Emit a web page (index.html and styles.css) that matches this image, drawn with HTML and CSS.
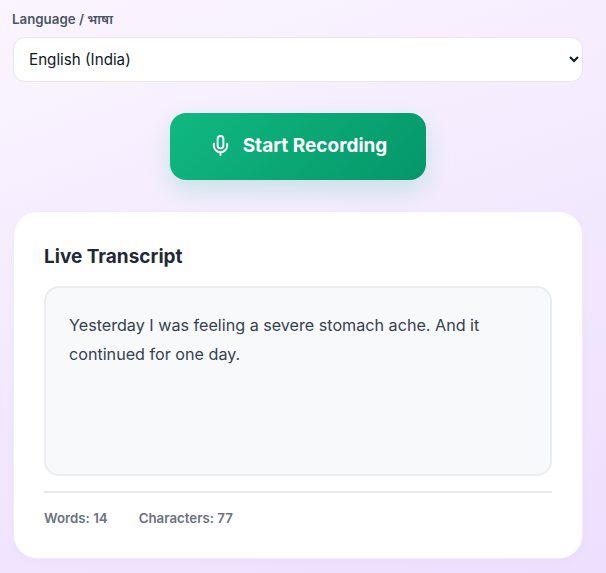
FILE: index.html
```html
<!DOCTYPE html>
<html lang="en">

<head>
    <meta charset="UTF-8">
    <meta name="viewport" content="width=device-width, initial-scale=1.0">
    <title>Live Transcript</title>
    <link rel="stylesheet" href="styles.css">
</head>

<body>

    <div class="language">
        <label class="language-label" for="language">Language / भाषा</label>
        <select class="language-select" id="language">
            <option>English (India)</option>
        </select>
    </div>

    <div class="record-row">
        <button class="record-button">
            <svg class="mic" viewBox="0 0 24 24" fill="none" stroke="currentColor" stroke-width="2" stroke-linecap="round" stroke-linejoin="round">
                <path d="M12 2a3 3 0 0 0-3 3v7a3 3 0 0 0 6 0V5a3 3 0 0 0-3-3z"></path>
                <path d="M19 10v2a7 7 0 0 1-14 0v-2"></path>
                <line x1="12" y1="19" x2="12" y2="22"></line>
            </svg>
            Start Recording
        </button>
    </div>

    <div class="card">
        <h2 class="card-title">Live Transcript</h2>
        <div class="transcript">Yesterday I was feeling a severe stomach ache. And it continued for one day.</div>
        <div class="stats">
            <span>Words: 14</span>
            <span>Characters: 77</span>
        </div>
    </div>

</body>

</html>
```

FILE: styles.css
```css
* {
    box-sizing: border-box;
}

body {
    font-family: "Inter", "Noto Sans", sans-serif;
    background: linear-gradient(160deg, #fbf5ff 0%, #f2e8fe 55%, #eddffe 100%);
    height: 573px;
    margin: 0;
    padding: 11px 23px 0 13px;
    overflow: hidden;
}

.language-label {
    display: block;
    font-size: 13.3px;
    font-weight: 600;
    line-height: 17px;
    color: #4b5563;
    margin: 0 0 9px -1px;
}

.language-select {
    display: block;
    width: 100%;
    height: 45px;
    padding: 0 11px;
    font-family: inherit;
    font-size: 15.2px;
    color: #111827;
    background-color: #fff;
    border: 1px solid #e9e6ef;
    border-radius: 12px;
}

.record-row {
    display: flex;
    justify-content: center;
    margin-top: 31px;
}

.record-button {
    display: flex;
    align-items: center;
    justify-content: center;
    gap: 11px;
    width: 256px;
    height: 67px;
    padding-bottom: 3px;
    font-family: inherit;
    font-size: 19px;
    font-weight: 700;
    color: #fff;
    background: linear-gradient(135deg, #10b981, #059669);
    border: none;
    border-radius: 16px;
    box-shadow: 0 10px 25px rgba(16, 185, 129, 0.2);
}

.mic {
    width: 23px;
    height: 23px;
}

.card {
    margin-top: 31px;
    height: 348px;
    padding: 33px 30px 0;
    background-color: #fff;
    border: 1px solid #f3e8ff;
    border-radius: 24px;
    box-shadow: 0 4px 12px rgba(0, 0, 0, 0.02);
}

.card-title {
    margin: 0 0 17px;
    font-size: 19px;
    font-weight: 700;
    line-height: 24px;
    color: #1f2937;
}

.transcript {
    height: 190px;
    padding: 23px 23px 23px 23px;
    font-size: 16.15px;
    line-height: 29px;
    color: #374151;
    background-color: #f8f9fb;
    border: 2px solid #ebecef;
    border-radius: 15px;
}

.stats {
    display: flex;
    gap: 31px;
    margin-top: 15px;
    padding-top: 17px;
    border-top: 2px solid #e8e9ed;
    font-size: 13.3px;
    font-weight: 600;
    line-height: 17px;
    color: #6b7280;
}
```
